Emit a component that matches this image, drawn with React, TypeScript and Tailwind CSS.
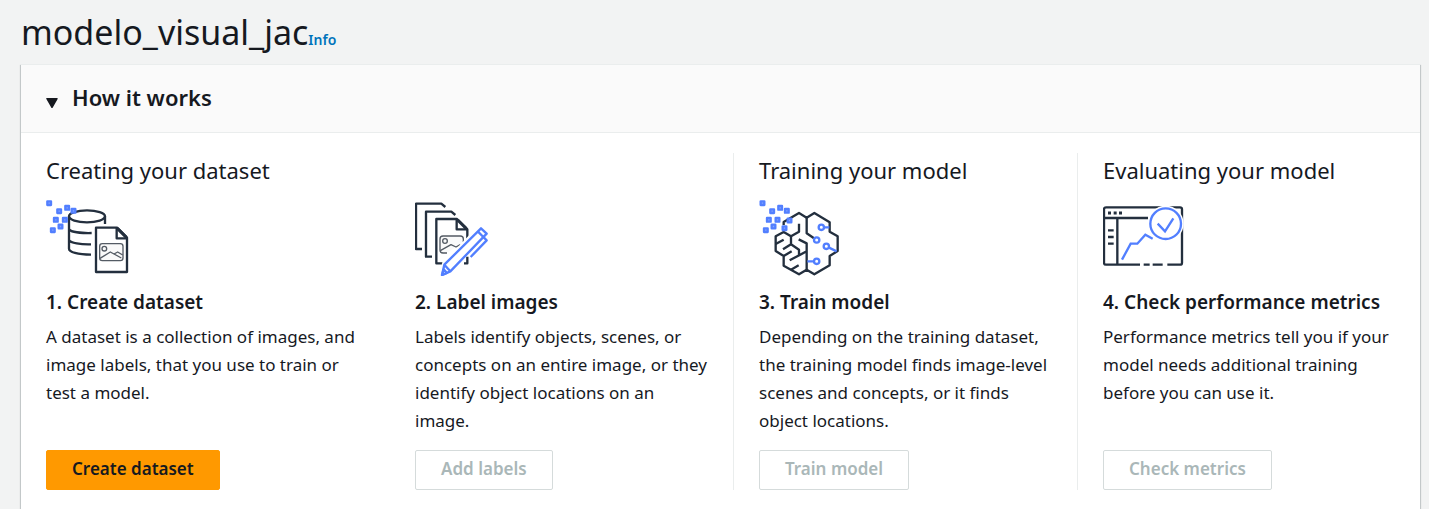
import type { ReactNode } from "react";

const NAVY = "#232f3e";
const BLUE = "#527fff";

function Squares({ points }: { points: number[][] }) {
  return (
    <g fill="#86a5ff" stroke={BLUE} strokeWidth="7">
      {points.map(([x, y]) => (
        <rect key={`${x}-${y}`} x={x - 5} y={y - 5} width="11" height="11" />
      ))}
    </g>
  );
}

function Icon({ left = 30, children }: { left?: number; children: ReactNode }) {
  return (
    <svg
      className="mt-3 h-[76px] w-[83px] shrink-0"
      viewBox={`${left} 30 249 228`}
      fill="none"
      strokeLinejoin="round"
      aria-hidden="true"
    >
      {children}
    </svg>
  );
}

function DatasetIcon() {
  return (
    <Icon>
      <g stroke={NAVY} strokeWidth="7">
        <ellipse cx="153" cy="79" rx="54" ry="18" />
        <path d="M99 79V176C99 186 125 194 165 194M207 79V102M99 117C103 126 135 130 167 129M99 150C103 159 135 164 165 163" />
        <path d="M180 113H243L273 143V246H180Z" />
        <path d="M242 113V145H273" />
        <path d="M244 115L271 142" strokeWidth="9" />
      </g>
      <g stroke="#545b64" strokeWidth="4">
        <rect x="191" y="161" width="70" height="51" rx="8" fill="#fafafa" />
        <circle cx="205" cy="176" r="7" />
        <path d="M192 205L223 186L234 192L245 186L260 195M234 192L256 204" />
      </g>
      <Squares
        points={[[39, 39], [69, 63], [93, 53], [112, 62], [59, 89], [86, 89], [73, 109], [50, 120]]}
      />
    </Icon>
  );
}

function LabelIcon() {
  return (
    <Icon>
      <g stroke={NAVY} strokeWidth="7">
        <path d="M51 177H33V41H109L121 51" />
        <path d="M81 200H63V65H139L151 75" />
        <path d="M112 220H94V87H156L187 118V146M187 200V220H177" />
        <path d="M155 87V118H187" />
        <path d="M158 90L184 116" strokeWidth="9" />
      </g>
      <g stroke="#545b64" strokeWidth="4">
        <path
          d="M126 189H114C108 189 105 186 105 180V147C105 141 108 138 114 138H166C172 138 175 141 175 147V156"
          fill="#fafafa"
        />
        <circle cx="120" cy="153" r="7" />
        <path d="M106 182L138 164L153 171L166 164" />
      </g>
      <path d="M104 240L112 220L215 112L228 115L245 131L136 244Z" fill="white" />
      <path
        d="M111 255L118 224L228 115L245 131L136 244Z"
        fill="white"
        stroke={BLUE}
        strokeWidth="7"
      />
      <path
        d="M118 224L136 244M219 125L235 141M234 140L245 151L197 201M111 255L116 238L126 249Z"
        stroke={BLUE}
        strokeWidth="7"
      />
    </Icon>
  );
}

function TrainIcon() {
  return (
    <Icon left={27}>
      <g stroke={NAVY} strokeWidth="7">
        <path d="M101 105V96L147 69L170 83L193 69L239 97V125L263 139V183L239 198V226L193 253L170 239L147 253L101 227V198L77 183V139L101 126L123 139L147 125V101" />
        <path d="M170 83V130L192 145M170 239V160L146 148M123 139V163L99 178M123 163L147 179V196M170 184L119 211M77 162L101 149M101 198L125 184M123 239L146 226" />
      </g>
      <g stroke={BLUE} strokeWidth="7">
        <circle cx="214" cy="112" r="8" />
        <circle cx="200" cy="150" r="8" fill="white" />
        <circle cx="229" cy="169" r="8" />
        <circle cx="200" cy="214" r="8" />
        <path d="M223 112H238M237 173L260 184M172 214H191" />
      </g>
      <Squares
        points={[[37, 39], [66, 63], [90, 53], [110, 62], [56, 89], [82, 89], [118, 91], [70, 109], [103, 114], [47, 120]]}
      />
    </Icon>
  );
}

function MetricsIcon() {
  return (
    <Icon left={39}>
      <g stroke={NAVY} strokeWidth="7">
        <path d="M150 224H48Q42 224 42 218V58Q42 52 48 52H270Q276 52 276 58V218Q276 224 270 224H232M161 224H179M188 224H218" />
        <path d="M42 84H174M82 84V224M54 121H71M54 141H71M54 161H71" />
        <path d="M54 69H63M71 69H80M87 69H96" strokeWidth="9" />
      </g>
      <circle cx="227" cy="101" r="54" fill="white" />
      <circle cx="227" cy="101" r="46" fill="white" stroke={BLUE} strokeWidth="7" />
      <path
        d="M203 101L225 124L250 85M96 209L122 161H142L166 134L188 146"
        stroke={BLUE}
        strokeWidth="7"
        strokeLinejoin="miter"
      />
    </Icon>
  );
}

type StepProps = {
  heading?: string;
  icon: ReactNode;
  title: string;
  text: string;
  action: string;
  primary?: boolean;
  divided?: boolean;
};

function Step({ heading, icon, title, text, action, primary, divided }: StepProps) {
  return (
    <section
      className={`flex flex-col items-start pr-[25px] ${divided ? "border-l border-[#eaeded] pl-[25px]" : ""}`}
    >
      <h3 className="h-[35px] text-[22px] leading-[35px] whitespace-nowrap">{heading}</h3>
      {icon}
      <h4 className="mt-3 text-[19px] leading-7 font-semibold whitespace-nowrap">{title}</h4>
      <p className="mt-[7px] mb-[15px] max-w-[320px] text-[17px] leading-7">{text}</p>
      <button
        type="button"
        disabled={!primary}
        className={`mt-auto h-10 rounded-[2px] border px-[25px] pb-[2px] text-[17px] font-semibold whitespace-nowrap ${
          primary
            ? "border-[#ff9900] bg-[#ff9900] text-[#16191f]"
            : "border-[#d5dbdb] bg-white text-[#aab7b8]"
        }`}
      >
        {action}
      </button>
    </section>
  );
}

export default function App() {
  return (
    <main className="min-h-screen bg-[#f2f3f3] pr-[9px] pl-[21px] font-['Noto_Sans','Open_Sans',sans-serif] text-[#16191f]">
      <header className="flex h-16 items-baseline pt-2">
        <h1 className="text-[34px] leading-[48px]">modelo_visual_jac</h1>
        <a href="#info" className="text-[14px] font-semibold text-[#0073bb]">
          Info
        </a>
      </header>
      <div className="border-t border-[#eaeded] bg-white shadow-[0_1px_1px_0_rgba(0,28,36,0.3),1px_1px_1px_0_rgba(0,28,36,0.15),-1px_1px_1px_0_rgba(0,28,36,0.15)]">
        <button
          type="button"
          aria-expanded="true"
          className="flex h-[68px] w-full items-center gap-[14px] border-b border-[#eaeded] bg-[#fafafa] pl-[25px] text-left"
        >
          <svg className="mt-2 h-3 w-3" viewBox="0 0 12 12" aria-hidden="true">
            <path
              d="M1 1.7H11L6 10.3Z"
              fill="#16191f"
              stroke="#16191f"
              strokeWidth="1.5"
              strokeLinejoin="round"
            />
          </svg>
          <h2 className="pb-1 text-[22px] leading-8 font-semibold">How it works</h2>
        </button>
        <div className="grid grid-cols-[369fr_318fr_344fr_343fr] py-5 pl-[25px]">
          <Step
            heading="Creating your dataset"
            icon={<DatasetIcon />}
            title="1. Create dataset"
            text="A dataset is a collection of images, and image labels, that you use to train or test a model."
            action="Create dataset"
            primary
          />
          <Step
            icon={<LabelIcon />}
            title="2. Label images"
            text="Labels identify objects, scenes, or concepts on an entire image, or they identify object locations on an image."
            action="Add labels"
          />
          <Step
            heading="Training your model"
            icon={<TrainIcon />}
            title="3. Train model"
            text="Depending on the training dataset, the training model finds image-level scenes and concepts, or it finds object locations."
            action="Train model"
            divided
          />
          <Step
            heading="Evaluating your model"
            icon={<MetricsIcon />}
            title="4. Check performance metrics"
            text="Performance metrics tell you if your model needs additional training before you can use it."
            action="Check metrics"
            divided
          />
        </div>
      </div>
    </main>
  );
}
